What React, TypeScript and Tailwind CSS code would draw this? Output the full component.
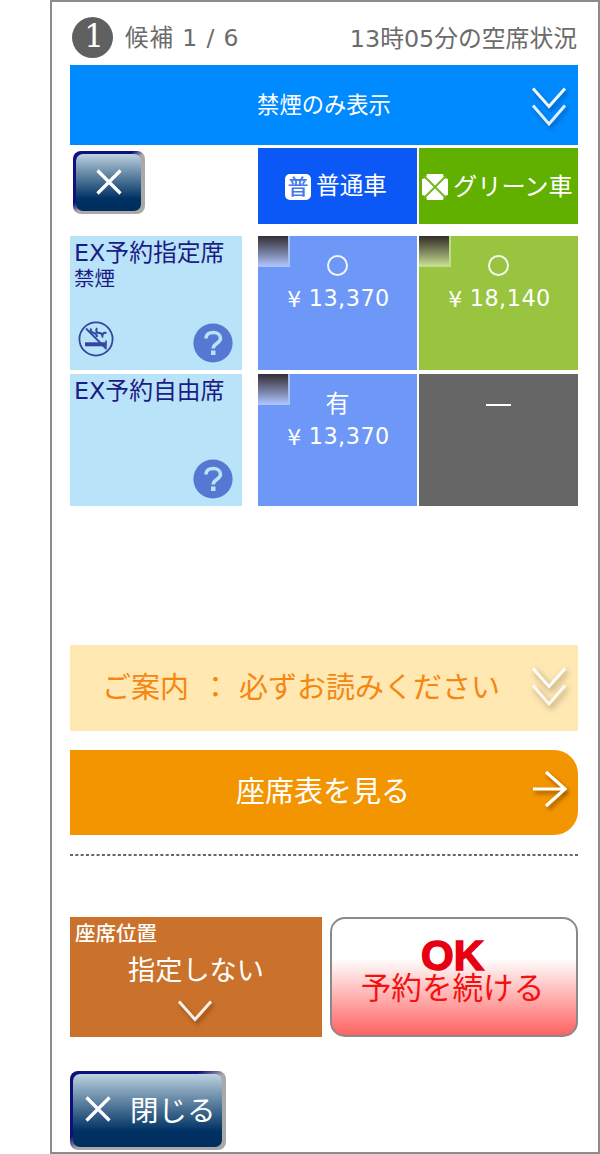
import type { ReactNode } from "react";

function Cross() {
  return (
    <svg width="26" height="26" viewBox="0 0 26 26" fill="none">
      <path d="M1.5 1.5 24.5 24.5M24.5 1.5 1.5 24.5" stroke="#fff" strokeWidth="3.2" />
    </svg>
  );
}

function DoubleChevron({ shadow }: { shadow: string }) {
  return (
    <svg
      width="36"
      height="40"
      viewBox="0 0 36 40"
      fill="none"
      stroke="#fff"
      strokeWidth="3"
      className={shadow}
    >
      <path d="M2 1.5 18 19.5 34 1.5" opacity="0.95" />
      <path d="M2 18.5 18 37 34 18.5" opacity="0.88" />
    </svg>
  );
}

function NoSmoking() {
  return (
    <svg width="36" height="36" viewBox="0 0 36 36" fill="none" stroke="#34459f">
      <circle cx="18" cy="18" r="16.6" strokeWidth="1.8" />
      <path d="M8 7.5 28.5 28" strokeWidth="1.8" />
      <path d="M7 23.3h20.5" strokeWidth="4" />
      <path d="M28 19.500v7" strokeWidth="1.6" />
      <path
        d="M13 7.5c-1 3 1 4 3 4.500s3 1.500 3 4M19 7c-2 3 0 5 2.500 5s3 2 3 4.500M28.500 12c-3-1-4.500 1-4 4"
        strokeWidth="2"
      />
    </svg>
  );
}

function Help() {
  return (
    <svg width="40" height="40" viewBox="0 0 40 40">
      <circle cx="20" cy="20" r="19.6" fill="#5678d2" />
      <path
        d="M13 15.500c0-4 3-6 7.200-6s7.300 2.300 7.300 5.800c0 5-7.300 5.200-7.300 10.200"
        fill="none"
        stroke="#b9e3f8"
        strokeWidth="3.600"
      />
      <path d="M18 27.500h4.500v4.500h-4.500z" fill="#b9e3f8" />
    </svg>
  );
}

function GlossyButton({ className, children }: { className: string; children: ReactNode }) {
  return (
    <button
      type="button"
      className={`flex rounded-[8px] bg-linear-[to_bottom_right,#10107c_0%,#10107c_42%,#a9a9a9_51%,#a9a9a9_100%] pt-[3px] pr-[4px] pb-[3px] pl-[3px] ${className}`}
    >
      <span className="flex h-full w-full items-center rounded-[7px] bg-linear-[180deg,#bdd3e2_0%,#8aa7be_20%,#003264_78%,#002d5e_100%]">
        {children}
      </span>
    </button>
  );
}

function Checkbox({ className }: { className: string }) {
  return (
    <span
      className={`absolute top-0 left-0 h-[31px] w-8 border-r-2 border-b border-white/40 bg-linear-to-b bg-no-repeat ${className}`}
    />
  );
}

function SeatCell({
  className,
  check,
  mark,
  price,
}: {
  className: string;
  check?: string;
  mark: ReactNode;
  price?: string;
}) {
  return (
    <div className={`relative flex w-[159px] flex-col items-center pt-[13px] text-white ${className}`}>
      {check && <Checkbox className={check} />}
      <div className="flex h-[33px] items-center text-[24px]">{mark}</div>
      {price && (
        <div className="ml-[2px] flex h-[34px] items-center gap-[7px] text-[22.3px] tracking-[0.5px]">
          <span className="text-[22px]">¥</span>
          <span>{price}</span>
        </div>
      )}
    </div>
  );
}

function RowLabel({ title, note, icon }: { title: string; note?: string; icon?: ReactNode }) {
  return (
    <div className="mr-4 flex w-[172px] flex-col bg-[#b9e3f8] pt-[2px] pr-[9px] pb-[7px] pl-1 text-[#1c1c84]">
      <div className="text-[23.8px] leading-[31px] whitespace-nowrap">{title}</div>
      {note && <div className="text-[20.5px] leading-[21px]">{note}</div>}
      <div className="mt-auto flex items-end">
        {icon}
        <span className="ml-auto">
          <Help />
        </span>
      </div>
    </div>
  );
}

const circle = <span className="mr-px h-[21px] w-[21px] rounded-full border-2 border-white/90" />;

export default function App() {
  return (
    <div className="h-[1154px] w-[600px] overflow-hidden bg-white pl-[50px] font-['DejaVu_Sans','Noto_Sans_CJK_JP',sans-serif]">
      <main className="flex h-full w-[550px] flex-col border-2 border-[#8c8c8c] pr-[20px] pl-[18px]">
        <header className="flex h-[63px] items-center pt-[7px] text-[23.8px] text-[#6b6b6b]">
          <span className="ml-[2px] flex size-[41px] items-center justify-center rounded-full bg-[#606060] pb-px pl-[3px] font-['DejaVu_Serif',serif] text-[31px] text-white">
            1
          </span>
          <span className="ml-[12px] pt-[3px] text-[23.5px] tracking-[0.9px]">候補 1 / 6</span>
          <span className="mr-px ml-auto pt-[5px] whitespace-nowrap">13時05分の空席状況</span>
        </header>

        <button
          type="button"
          className="relative flex h-[80px] shrink-0 items-center justify-center bg-[#008aff] pt-[2px] text-[22.3px] text-white"
        >
          禁煙のみ表示
          <span className="absolute top-[22px] right-[11px]">
            <DoubleChevron shadow="drop-shadow-[2px_3px_2px_rgba(0,50,110,0.5)]" />
          </span>
        </button>

        <div className="mt-[3px] flex h-[76px] gap-[2px] text-[23.6px] text-white">
          <div className="mr-[14px] w-[172px] pt-[3px] pl-[3px]">
            <GlossyButton className="h-[63px] w-[72px]">
              <span className="mx-auto pb-[2px]">
                <Cross />
              </span>
            </GlossyButton>
          </div>
          <div className="flex w-[159px] items-center justify-center gap-[5px] bg-[#0c58f6] pr-[3px]">
            <span className="mt-[2px] flex size-[26px] items-center justify-center rounded-[5px] bg-white text-[21px] leading-none font-medium text-[#4479ee]">
              普
            </span>
            <span className="pt-[2px]">普通車</span>
          </div>
          <div className="flex w-[159px] items-center gap-[5px] bg-[#61b000] pl-[3px] whitespace-nowrap">
            <svg width="26" height="26" viewBox="0 0 26 26" className="mt-[2px]">
              <path d="M5 0h16l1 4 4 1v16l-4 1-1 4H5l-1-4-4-1V5l4-1z" fill="#fff" />
              <path d="M2 2 24 24M24 2 2 24" stroke="#72b920" strokeWidth="2" />
            </svg>
            <span className="pt-[2px] text-[24.2px]">グリーン車</span>
          </div>
        </div>

        <section className="mt-[12px] flex flex-col gap-[4px]">
          <div className="flex h-[134px]">
            <RowLabel
              title="EX予約指定席"
              note="禁煙"
              icon={
                <span className="mb-[6px] ml-[4px]">
                  <NoSmoking />
                </span>
              }
            />
            <SeatCell
              className="mr-[2px] bg-[#6d98f7]"
              check="from-[#342f36] to-[#aec4ff]"
              mark={circle}
              price="13,370"
            />
            <SeatCell
              className="bg-[#98c440]"
              check="from-[#342f28] to-[#c8e194]"
              mark={circle}
              price="18,140"
            />
          </div>
          <div className="flex h-[132px]">
            <RowLabel title="EX予約自由席" />
            <SeatCell
              className="mr-[2px] bg-[#6d98f7]"
              check="from-[#342f36] to-[#aec4ff]"
              mark="有"
              price="13,370"
            />
            <SeatCell
              className="bg-[#666666]"
              mark={<span className="mt-[2px] h-[2px] w-[25px] bg-white" />}
            />
          </div>
        </section>

        <button
          type="button"
          className="relative mt-[139px] flex h-[86px] shrink-0 items-center bg-[#ffe8b2] pt-[2px] pl-[32px] text-[29px] whitespace-pre text-[#f58610]"
        >
          <span>ご案内</span>
          <span className="mr-[9px] ml-[12px]">：</span>
          <span>必ずお読みください</span>
          <span className="absolute top-[22px] right-[11px]">
            <DoubleChevron shadow="drop-shadow-[2px_3px_3px_rgba(90,80,50,0.6)]" />
          </span>
        </button>

        <button
          type="button"
          className="relative mt-[19px] flex h-[85px] shrink-0 items-center justify-center rounded-r-[24px] bg-[#f39500] pr-[2px] text-[29px] text-white"
        >
          座席表を見る
          <svg
            width="36"
            height="38"
            viewBox="0 0 36 38"
            fill="none"
            className="absolute top-[20px] right-[10px] drop-shadow-[2px_3px_2px_rgba(90,45,0,0.6)]"
          >
            <path d="M1 19h32M14 2 33 19 14 36" stroke="#fff" strokeWidth="3.200" />
          </svg>
        </button>

        <svg width="508" height="2" className="mt-[19px] shrink-0">
          <path d="M0 1h508" stroke="#666" strokeWidth="2" strokeDasharray="3 2.316" />
        </svg>

        <div className="mt-[61px] flex h-[120px] gap-[8px]">
          <button
            type="button"
            className="flex w-[252px] flex-col items-center bg-[#ca722b] text-white"
          >
            <span className="self-start pt-px pl-[5px] text-[20.5px] leading-[32px] font-medium">
              座席位置
            </span>
            <span className="text-[27.2px] leading-[42px]">指定しない</span>
            <svg
              width="36"
              height="24"
              viewBox="0 0 36 24"
              fill="none"
              className="mt-[8px] mr-[3px] drop-shadow-[2px_3px_2px_rgba(70,30,0,0.5)]"
            >
              <path d="M2 1.500 18 19.500 34 1.500" stroke="#fff" strokeWidth="3" opacity="0.9" />
            </svg>
          </button>
          <button
            type="button"
            className="flex w-[248px] flex-col items-center rounded-[15px] border-2 border-[#8a8a8a] bg-linear-[180deg,#fff_0%,#fff_34%,#ff6262_100%] pt-[20px] pr-[3px]"
          >
            <span className="font-['Liberation_Sans',sans-serif] text-[42px] leading-[34px] font-bold text-[#e60012] [-webkit-text-stroke:1.5px_#e60012]">
              OK
            </span>
            <span className="text-[30.6px] leading-[32px] whitespace-nowrap text-[#f5100f]">
              予約を続ける
            </span>
          </button>
        </div>

        <GlossyButton className="mt-[34px] h-[79px] w-[156px] shrink-0">
          <span className="ml-[12px] pb-[4px]">
            <Cross />
          </span>
          <span className="ml-[19px] pt-[3px] text-[28.500px] whitespace-nowrap text-white">閉じる</span>
        </GlossyButton>
      </main>
    </div>
  );
}
